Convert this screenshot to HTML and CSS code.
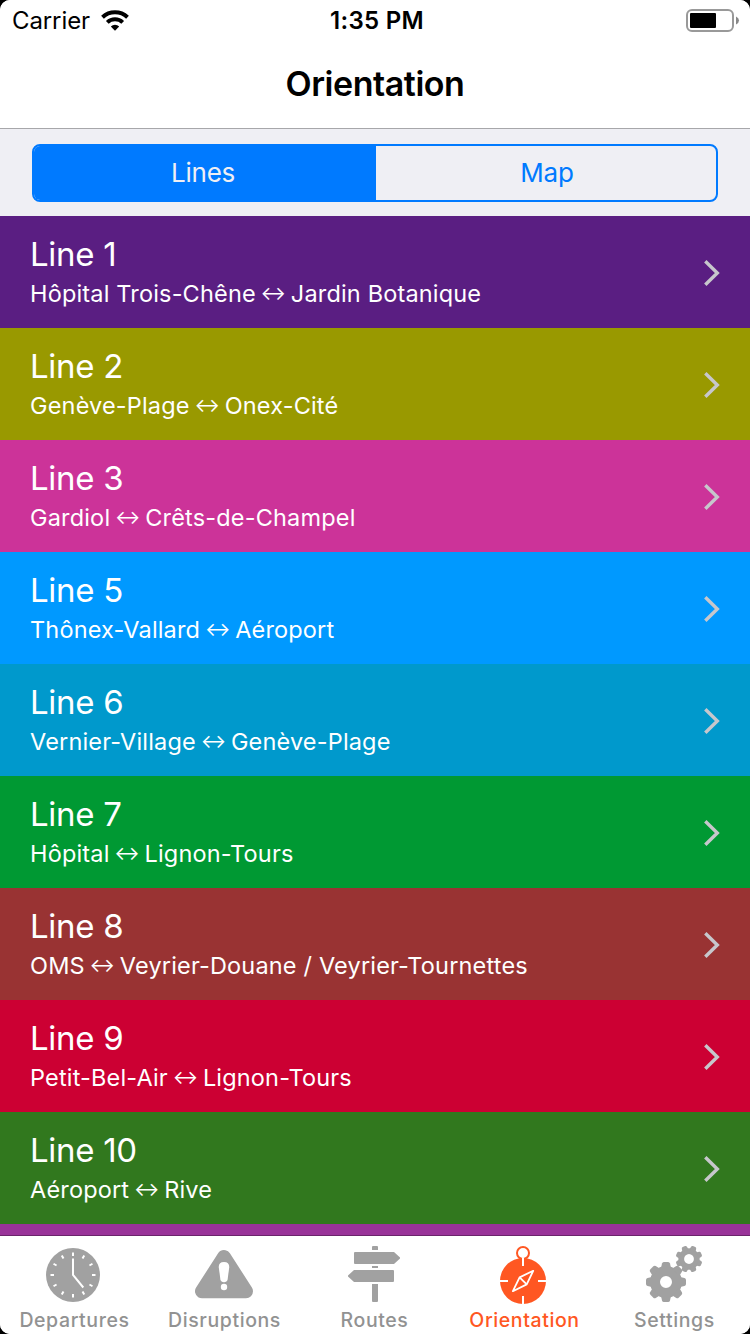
FILE: index.html
```html
<!DOCTYPE html>
<html lang="en">
<head>
<meta charset="utf-8">
<title>Orientation</title>
<link rel="stylesheet" href="styles.css">
</head>
<body>
<div class="app">
  <header class="header">
    <div class="status">
      <div class="status-left">
        <span class="carrier">Carrier</span>
        <svg class="wifi" viewBox="0 0 28 21" width="28" height="21" fill="none" stroke="#000" stroke-width="4">
          <path d="M1.5 7.3A18.3 18.3 0 0 1 26.5 7.3"/>
          <path d="M6.3 12.4A11.3 11.3 0 0 1 21.7 12.4"/>
          <path d="M14 20.7L9.8 16.5A6 6 0 0 1 18.2 16.5Z" fill="#000" stroke="none"/>
        </svg>
      </div>
      <span class="time">1:35 PM</span>
      <div class="status-right">
        <svg viewBox="0 0 54 24" width="54" height="24">
          <rect x="1" y="1" width="46" height="21" rx="5" fill="none" stroke="#999" stroke-width="2"/>
          <rect x="4" y="4" width="26" height="15" rx="1" fill="#000"/>
          <path d="M50 7.5Q53 9 53 11.5T50 15.5Z" fill="#888"/>
        </svg>
      </div>
    </div>
    <h1 class="title">Orientation</h1>
  </header>
  <div class="segment-bar">
    <div class="segments">
      <div class="segment segment-on">Lines</div>
      <div class="segment">Map</div>
    </div>
  </div>
  <svg width="0" height="0" class="defs">
    <symbol id="chevron" viewBox="0 0 18 28"><path d="M2.3 2.3L14.3 14L2.3 25.7" fill="none" stroke="#c7c7cc" stroke-width="3.4"/></symbol>
  </svg>
  <main class="list">
    <div class="row l1"><div><div class="name">Line 1</div><div class="route">Hôpital Trois-Chêne<span class="arrow">↔</span>Jardin Botanique</div></div><svg class="chevron"><use href="#chevron"/></svg></div>
    <div class="row l2"><div><div class="name">Line 2</div><div class="route">Genève-Plage<span class="arrow">↔</span>Onex-Cité</div></div><svg class="chevron"><use href="#chevron"/></svg></div>
    <div class="row l3"><div><div class="name">Line 3</div><div class="route">Gardiol<span class="arrow">↔</span>Crêts-de-Champel</div></div><svg class="chevron"><use href="#chevron"/></svg></div>
    <div class="row l5"><div><div class="name">Line 5</div><div class="route">Thônex-Vallard<span class="arrow">↔</span>Aéroport</div></div><svg class="chevron"><use href="#chevron"/></svg></div>
    <div class="row l6"><div><div class="name">Line 6</div><div class="route">Vernier-Village<span class="arrow">↔</span>Genève-Plage</div></div><svg class="chevron"><use href="#chevron"/></svg></div>
    <div class="row l7"><div><div class="name">Line 7</div><div class="route">Hôpital<span class="arrow">↔</span>Lignon-Tours</div></div><svg class="chevron"><use href="#chevron"/></svg></div>
    <div class="row l8"><div><div class="name">Line 8</div><div class="route">OMS<span class="arrow">↔</span>Veyrier-Douane / Veyrier-Tournettes</div></div><svg class="chevron"><use href="#chevron"/></svg></div>
    <div class="row l9"><div><div class="name">Line 9</div><div class="route">Petit-Bel-Air<span class="arrow">↔</span>Lignon-Tours</div></div><svg class="chevron"><use href="#chevron"/></svg></div>
    <div class="row l10"><div><div class="name">Line 10</div><div class="route">Aéroport<span class="arrow">↔</span>Rive</div></div><svg class="chevron"><use href="#chevron"/></svg></div>
    <div class="row l11"></div>
  </main>
  <nav class="tabs">
    <div class="tab">
      <svg class="icon" viewBox="0 0 60 60">
        <circle cx="28" cy="31" r="27" fill="currentColor"/>
        <g stroke="#fff" stroke-width="2" fill="none">
          <path id="tick" d="M28 8.5V12M28 50V53.5"/>
          <use href="#tick" transform="rotate(30 28 31)"/><use href="#tick" transform="rotate(60 28 31)"/>
          <use href="#tick" transform="rotate(90 28 31)"/><use href="#tick" transform="rotate(120 28 31)"/>
          <use href="#tick" transform="rotate(150 28 31)"/>
          <path d="M28 14.5V31L38.3 43.5"/>
        </g>
      </svg>
      <span class="label">Departures</span>
    </div>
    <div class="tab">
      <svg class="icon" viewBox="0 0 60 60">
        <path d="M29 13L7 47.3H51Z" fill="currentColor" stroke="currentColor" stroke-width="14" stroke-linejoin="round"/>
        <path d="M29 18Q34.6 18 34.2 23.5L32.6 35.5Q32 38.3 29 38.3T25.4 35.5L23.8 23.5Q23.4 18 29 18Z" fill="#fff"/>
        <circle cx="29" cy="43" r="3.2" fill="#fff"/>
      </svg>
      <span class="label">Disruptions</span>
    </div>
    <div class="tab">
      <svg class="icon" viewBox="0 0 60 60" fill="currentColor">
        <path d="M27 6V3Q27 2 28 2H32Q33 2 33 3V6ZM10 8H49L55 13.5V14.5L49 20H10Q9 20 9 19V9Q9 8 10 8ZM27 22H33V24H27ZM9 26H48Q49 26 49 27V37Q49 38 48 38H9L3 32.5V31.5ZM27 40H33V57Q33 58 32 58H28Q27 58 27 57Z"/>
      </svg>
      <span class="label">Routes</span>
    </div>
    <div class="tab tab-on">
      <svg class="icon" viewBox="0 0 60 60">
        <circle cx="28" cy="37" r="23" fill="currentColor"/>
        <circle cx="28" cy="9" r="6" fill="#fff" stroke="currentColor" stroke-width="2"/>
        <g fill="none" stroke="#fff" stroke-width="2">
          <path d="M28 13.5V22M5 37H13M43 37H51M28 52V60"/>
          <path d="M38.2 26.8L24.6 33.4L17.9 47.2L31.7 40.4Z" stroke-width="1.8" stroke-linejoin="round"/>
          <path d="M24.6 33.4L31.7 40.4" stroke-width="1.8"/>
        </g>
      </svg>
      <span class="label">Orientation</span>
    </div>
    <div class="tab">
      <svg class="icon" viewBox="0 0 60 60" fill="currentColor">
        <circle cx="21" cy="38" r="11" fill="none" stroke="currentColor" stroke-width="10"/>
        <path id="cog" d="M16 24L17 19.5Q17.4 18 18.9 18H23.1Q24.6 18 25 19.5L26 24Z"/>
        <use href="#cog" transform="rotate(45 21 38)"/><use href="#cog" transform="rotate(90 21 38)"/>
        <use href="#cog" transform="rotate(135 21 38)"/><use href="#cog" transform="rotate(180 21 38)"/>
        <use href="#cog" transform="rotate(225 21 38)"/><use href="#cog" transform="rotate(270 21 38)"/>
        <use href="#cog" transform="rotate(315 21 38)"/>
        <g transform="rotate(22.5 44 15)">
          <circle cx="44" cy="15" r="7.8" fill="none" stroke="currentColor" stroke-width="5.8"/>
          <path id="minicog" d="M40.8 6L41.2 3Q41.5 1.6 42.7 1.6H45.3Q46.5 1.6 46.8 3L47.2 6Z"/>
          <use href="#minicog" transform="rotate(45 44 15)"/><use href="#minicog" transform="rotate(90 44 15)"/>
          <use href="#minicog" transform="rotate(135 44 15)"/><use href="#minicog" transform="rotate(180 44 15)"/>
          <use href="#minicog" transform="rotate(225 44 15)"/><use href="#minicog" transform="rotate(270 44 15)"/>
          <use href="#minicog" transform="rotate(315 44 15)"/>
        </g>
      </svg>
      <span class="label">Settings</span>
    </div>
  </nav>
</div>
</body>
</html>
```
FILE: styles.css
```css
* { box-sizing: border-box; }
body { margin: 0; background: #000; font-family: Inter, "Liberation Sans", sans-serif; }
.app { width: 750px; height: 1334px; display: flex; flex-direction: column; overflow: hidden; border-radius: 10px; background: #fff; }
.header { height: 129px; border-bottom: 1px solid #a7a7aa; background: #fff; }
.status { height: 41px; display: grid; grid-template-columns: 1fr auto 1fr; align-items: center; padding: 1px 10px 0 12px; font-size: 24px; line-height: 40px; }
.status-left { display: flex; align-items: center; gap: 11px; }
.wifi { margin-bottom: 1px; }
.carrier { letter-spacing: -0.1px; }
.time { margin-left: 2px; font-weight: 600; letter-spacing: 0.3px; }
.status-right { display: flex; justify-content: flex-end; }
.title { margin: 0; height: 85px; line-height: 85px; text-align: center; font-size: 34px; font-weight: 600; letter-spacing: -0.45px; }
.segment-bar { height: 87px; padding: 15px 32px 14px; background: #efeff4; }
.segments { height: 58px; display: flex; border: 2px solid #007aff; border-radius: 8px; overflow: hidden; }
.segment { flex: 1; padding-left: 2px; text-align: center; font-size: 26px; line-height: 53px; letter-spacing: -0.2px; color: #007aff; }
.segment-on { flex: 0 0 342px; padding: 0 4px 0 0; background: #007aff; color: #efeff4; }
.defs { position: absolute; }
.list { flex: 1; min-height: 0; overflow: hidden; }
.row { height: 112px; display: flex; justify-content: space-between; align-items: center; padding: 2px 29px 0 30px; color: #fff; }
.name { font-size: 33px; line-height: 40px; padding-bottom: 2px; letter-spacing: -0.3px; }
.route { font-size: 23.5px; line-height: 36px; letter-spacing: 0.17px; white-space: nowrap; }
.arrow { display: inline-block; width: 35px; line-height: 20px; text-align: center; font-size: 19px; vertical-align: 2px; letter-spacing: 0; }
.chevron { width: 18px; height: 28px; }
.l1 { background: #5a1e82; }
.l2 { background: #999900; }
.l3 { background: #cc3399; }
.l5 { background: #0099ff; }
.l6 { background: #0099cc; }
.l7 { background: #009933; }
.l8 { background: #993333; }
.l9 { background: #cc0033; }
.l10 { background: #31781e; }
.l11 { background: #993399; }
.tabs { height: 99px; display: flex; border-top: 1px solid #6b246b; background: #fff; }
.tab { flex: 1; display: flex; flex-direction: column; align-items: center; padding-top: 8px; color: #929292; }
.icon { width: 60px; height: 60px; flex: none; color: #a1a1a1; }
.label { margin-left: -1px; font-size: 19.5px; font-weight: 500; line-height: 32px; letter-spacing: 0.6px; }
.tab-on, .tab-on .icon { color: #ff5722; }
```
